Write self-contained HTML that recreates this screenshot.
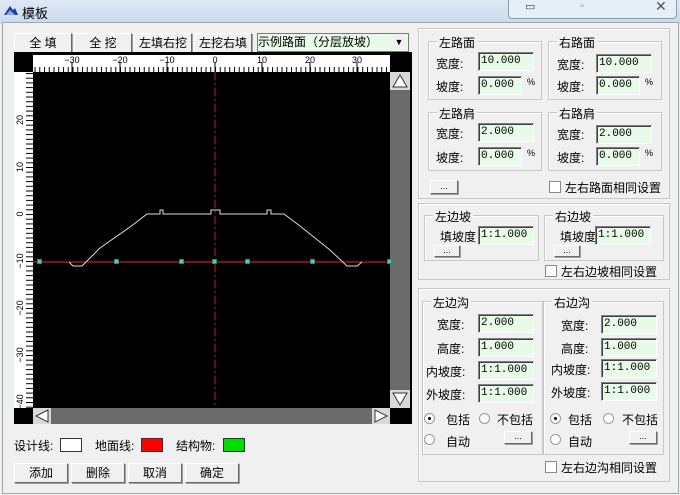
<html><head><style>
body{margin:0;width:680px;height:495px;background:#f0f0f0;font-family:"Liberation Sans","Noto Sans CJK SC",sans-serif;font-size:12px;color:#000;position:relative;overflow:hidden}
.a{position:absolute}
.btn{position:absolute;background:#f0f0f0;border:1px solid;border-color:#fff #696969 #696969 #fff;box-shadow:1px 1px 0 #a0a0a0;text-align:center;line-height:18px;font-size:12px}
.grp{position:absolute;border:1px solid #c8c8c8;box-shadow:inset 1px 1px 0 #fff}
.lg{position:absolute;top:-8px;left:8px;background:#f0f0f0;padding:0 2px;font-size:12px}
.in{position:absolute;background:#e8fbe8;border:1px solid;border-color:#808080 #fff #fff #808080;box-shadow:inset 1px 1px 0 #404040;font-family:"Liberation Mono",monospace;font-size:11px;line-height:17px;padding-left:2px;height:17px;margin-top:-1px}
.cb{position:absolute;width:10px;height:10px;border:1px solid #888;background:#fff}
.rd{position:absolute;width:9px;height:9px;border-radius:50%;border:1px solid #999;background:#fff}
.rd.on::after{content:"";position:absolute;left:3px;top:3px;width:3px;height:3px;border-radius:50%;background:#000}
</style></head><body>
<div class="a" style="left:0;top:0;width:680px;height:24px;background:linear-gradient(#dfe9f5,#c9d9ec)"></div>
<svg class="a" style="left:3px;top:4px" width="16" height="12"><path d="M1 11 L7 2 L10 6 L12 4 L15 11Z" fill="#1d3f9a"/><path d="M3 11 L7 6 L12 11Z" fill="#7fb0e8"/></svg>
<div class="a" style="left:22px;top:3px;font-size:13px">模板</div>
<div class="a" style="left:508px;top:0;width:167px;height:18px;border:1px solid #8a9ab0;border-top:none;border-radius:0 0 4px 4px;background:#e6eef8"></div>
<div class="a" style="left:525px;top:0;font-size:11px;color:#333">▭</div>
<div class="a" style="left:580px;top:0;font-size:11px;color:#999">▫</div>
<div class="a" style="left:655px;top:-2px;font-size:14px;color:#555">✕</div>
<div class="a" style="left:2px;top:22px;width:675px;height:470px;border:1px solid #9aa;background:#f0f0f0"></div>

<div class="btn" style="left:14px;top:33px;width:56px">全 填</div>
<div class="btn" style="left:74px;top:33px;width:56px">全 挖</div>
<div class="btn" style="left:134px;top:33px;width:56px">左填右挖</div>
<div class="btn" style="left:194px;top:33px;width:56px">左挖右填</div>
<div class="a" style="left:257px;top:33px;width:150px;height:17px;background:#e8fbe8;border:1px solid #7a7a7a;font-size:12px;line-height:17px">示例路面（分层放坡）</div>
<div class="a" style="left:392px;top:35px;width:14px;height:14px;background:#f0f0f0;font-size:9px;text-align:center;line-height:14px">▼</div>

<svg class="a" style="left:14px;top:52px" width="398" height="372">
<defs>
<pattern id="hp" patternUnits="userSpaceOnUse" x="201" y="0" width="4.75" height="20"><line x1="0.5" y1="15" x2="0.5" y2="20" stroke="#000"/></pattern>
<pattern id="vp" patternUnits="userSpaceOnUse" x="0" y="162" width="19" height="4.7"><line x1="12" y1="0.5" x2="19" y2="0.5" stroke="#000"/></pattern>
</defs>
<rect width="398" height="372" fill="#000"/>
<rect x="19" y="3" width="357" height="17" fill="#fff"/>
<rect x="19" y="3" width="357" height="17" fill="url(#hp)"/>
<rect x="0" y="20" width="19" height="336" fill="#fff"/>
<rect x="0" y="20" width="19" height="336" fill="url(#vp)"/>
<g stroke="#000"><line x1="58" y1="10" x2="58" y2="20"/><line x1="106" y1="10" x2="106" y2="20"/><line x1="153" y1="10" x2="153" y2="20"/><line x1="201" y1="10" x2="201" y2="20"/><line x1="248" y1="10" x2="248" y2="20"/><line x1="296" y1="10" x2="296" y2="20"/><line x1="343" y1="10" x2="343" y2="20"/></g>
<g font-size="9" font-family="Liberation Sans" text-anchor="middle"><text x="58" y="11">−30</text><text x="106" y="11">−20</text><text x="153" y="11">−10</text><text x="201" y="11">0</text><text x="248" y="11">10</text><text x="296" y="11">20</text><text x="343" y="11">30</text></g>
<g font-size="9" font-family="Liberation Sans" text-anchor="middle">
<text transform="translate(9,68) rotate(-90)">20</text><text transform="translate(9,115) rotate(-90)">10</text><text transform="translate(9,162) rotate(-90)">0</text><text transform="translate(9,209) rotate(-90)">−10</text><text transform="translate(9,256) rotate(-90)">−20</text><text transform="translate(9,303) rotate(-90)">−30</text><text transform="translate(9,350) rotate(-90)">−40</text></g>
<rect x="376" y="20" width="20" height="336" fill="#6b6b6b"/>
<rect x="376" y="20" width="20" height="18" fill="#d8d8d8"/><path d="M379 35 L386 23 L393 35Z" fill="#fff" stroke="#333"/>
<rect x="376" y="338" width="20" height="18" fill="#d8d8d8"/><path d="M379 341 L386 353 L393 341Z" fill="#fff" stroke="#333"/>
<rect x="19" y="356" width="357" height="16" fill="#6b6b6b"/>
<rect x="19" y="356" width="18" height="16" fill="#d8d8d8"/><path d="M34 358 L22 364 L34 370Z" fill="#fff" stroke="#333"/>
<rect x="358" y="356" width="18" height="16" fill="#d8d8d8"/><path d="M361 358 L373 364 L361 370Z" fill="#fff" stroke="#333"/>
<line x1="201" y1="20" x2="201" y2="356" stroke="#d01818" stroke-dasharray="8,3,2,3"/>
<line x1="19" y1="210" x2="376" y2="210" stroke="#c41820" stroke-width="1.3"/>
<polyline fill="none" stroke="#ddd" points="55,210 59,214 68,214 86,196 116,175 133,162 146,162 146,158 149,158 149,162 197,162 197,158 206,158 206,162 253,162 253,158 257,158 257,162 270,162 286,174 316,198 333,214 343,214 348,210"/>
<g fill="#4ed0c0" stroke="#2a8a80"><rect x="23.5" y="207.5" width="4" height="4"/><rect x="100.5" y="207.5" width="4" height="4"/><rect x="165.5" y="207.5" width="4" height="4"/><rect x="198.5" y="207.5" width="4" height="4"/><rect x="231.5" y="207.5" width="4" height="4"/><rect x="296.5" y="207.5" width="4" height="4"/><rect x="373.5" y="207.5" width="4" height="4"/></g>
</svg>

<div class="a" style="left:14px;top:437px">设计线:</div>
<div class="a" style="left:60px;top:438px;width:20px;height:12px;background:#fff;border:1px solid #333"></div>
<div class="a" style="left:95px;top:437px">地面线:</div>
<div class="a" style="left:141px;top:438px;width:20px;height:12px;background:#f00;border:1px solid #333"></div>
<div class="a" style="left:176px;top:437px">结构物:</div>
<div class="a" style="left:223px;top:438px;width:20px;height:12px;background:#0d0;border:1px solid #333"></div>
<div class="btn" style="left:14px;top:463px;width:52px">添加</div>
<div class="btn" style="left:71px;top:463px;width:52px">删除</div>
<div class="btn" style="left:128px;top:463px;width:52px">取消</div>
<div class="btn" style="left:185px;top:463px;width:52px">确定</div>

<div class="grp" style="left:418px;top:28px;width:250px;height:169px"></div>
<div class="grp" style="left:428px;top:41px;width:112px;height:57px"><span class="lg">左路面</span></div>
<div class="a" style="left:436px;top:55px">宽度:</div><div class="in" style="left:478px;top:53px;width:52px">10.000</div>
<div class="a" style="left:436px;top:78px">坡度:</div><div class="in" style="left:478px;top:77px;width:40px">0.000</div><div class="a" style="left:527px;top:77px;font-size:9px">%</div>
<div class="grp" style="left:548px;top:41px;width:112px;height:57px"><span class="lg">右路面</span></div>
<div class="a" style="left:557px;top:56px">宽度:</div><div class="in" style="left:596px;top:55px;width:52px">10.000</div>
<div class="a" style="left:557px;top:78px">坡度:</div><div class="in" style="left:596px;top:77px;width:40px">0.000</div><div class="a" style="left:645px;top:77px;font-size:9px">%</div>
<div class="grp" style="left:428px;top:112px;width:112px;height:57px"><span class="lg">左路肩</span></div>
<div class="a" style="left:436px;top:125px">宽度:</div><div class="in" style="left:478px;top:124px;width:52px">2.000</div>
<div class="a" style="left:436px;top:149px">坡度:</div><div class="in" style="left:478px;top:148px;width:40px">0.000</div><div class="a" style="left:527px;top:148px;font-size:9px">%</div>
<div class="grp" style="left:548px;top:112px;width:112px;height:57px"><span class="lg">右路肩</span></div>
<div class="a" style="left:557px;top:126px">宽度:</div><div class="in" style="left:596px;top:126px;width:52px">2.000</div>
<div class="a" style="left:557px;top:149px">坡度:</div><div class="in" style="left:596px;top:148px;width:40px">0.000</div><div class="a" style="left:645px;top:148px;font-size:9px">%</div>
<div class="btn" style="left:430px;top:180px;width:26px;height:12px;line-height:10px;font-size:9px">...</div>
<div class="cb" style="left:549px;top:181px"></div><div class="a" style="left:565px;top:179px">左右路面相同设置</div>

<div class="grp" style="left:418px;top:203px;width:250px;height:75px"></div>
<div class="grp" style="left:424px;top:215px;width:113px;height:44px"><span class="lg">左边坡</span></div>
<div class="a" style="left:440px;top:228px">填坡度</div><div class="in" style="left:478px;top:227px;width:52px">1:1.000</div>
<div class="btn" style="left:434px;top:245px;width:24px;height:10px;line-height:8px;font-size:9px">...</div>
<div class="grp" style="left:544px;top:215px;width:118px;height:44px"><span class="lg">右边坡</span></div>
<div class="a" style="left:560px;top:228px">填坡度</div><div class="in" style="left:595px;top:227px;width:52px">1:1.000</div>
<div class="btn" style="left:554px;top:245px;width:24px;height:10px;line-height:8px;font-size:9px">...</div>
<div class="cb" style="left:545px;top:265px"></div><div class="a" style="left:561px;top:263px">左右边坡相同设置</div>

<div class="grp" style="left:418px;top:288px;width:250px;height:192px"></div>
<div class="grp" style="left:422px;top:301px;width:119px;height:152px"><span class="lg">左边沟</span></div>
<div class="a" style="left:437px;top:316px">宽度:</div><div class="in" style="left:478px;top:315px;width:52px">2.000</div>
<div class="a" style="left:437px;top:340px">高度:</div><div class="in" style="left:478px;top:339px;width:52px">1.000</div>
<div class="a" style="left:426px;top:363px">内坡度:</div><div class="in" style="left:478px;top:362px;width:52px">1:1.000</div>
<div class="a" style="left:426px;top:386px">外坡度:</div><div class="in" style="left:478px;top:385px;width:52px">1:1.000</div>
<div class="rd on" style="left:424px;top:413px"></div><div class="a" style="left:446px;top:411px">包括</div>
<div class="rd" style="left:479px;top:413px"></div><div class="a" style="left:497px;top:411px">不包括</div>
<div class="rd" style="left:424px;top:434px"></div><div class="a" style="left:446px;top:433px">自动</div>
<div class="btn" style="left:504px;top:431px;width:26px;height:11px;line-height:9px;font-size:9px">...</div>
<div class="grp" style="left:543px;top:301px;width:119px;height:152px"><span class="lg">右边沟</span></div>
<div class="a" style="left:561px;top:317px">宽度:</div><div class="in" style="left:601px;top:316px;width:52px">2.000</div>
<div class="a" style="left:561px;top:340px">高度:</div><div class="in" style="left:601px;top:339px;width:52px">1.000</div>
<div class="a" style="left:551px;top:361px">内坡度:</div><div class="in" style="left:601px;top:360px;width:52px">1:1.000</div>
<div class="a" style="left:551px;top:384px">外坡度:</div><div class="in" style="left:601px;top:383px;width:52px">1:1.000</div>
<div class="rd on" style="left:550px;top:413px"></div><div class="a" style="left:568px;top:411px">包括</div>
<div class="rd" style="left:603px;top:413px"></div><div class="a" style="left:622px;top:411px">不包括</div>
<div class="rd" style="left:550px;top:434px"></div><div class="a" style="left:568px;top:433px">自动</div>
<div class="btn" style="left:629px;top:431px;width:26px;height:11px;line-height:9px;font-size:9px">...</div>
<div class="cb" style="left:545px;top:461px"></div><div class="a" style="left:561px;top:459px">左右边沟相同设置</div>
</body></html>
